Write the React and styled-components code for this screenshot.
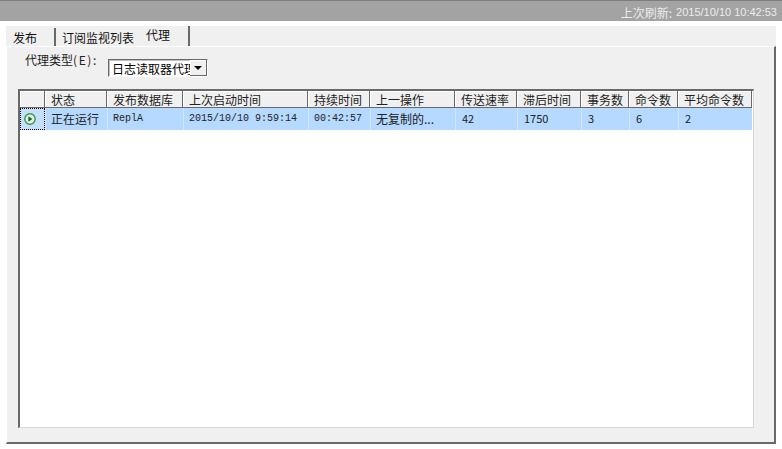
import React from 'react';
import styled, { createGlobalStyle } from 'styled-components';

const GlobalStyle = createGlobalStyle`
  html, body { margin: 0; padding: 0; background: #fff; }
  body { font-family: "Noto Sans CJK SC", "Liberation Sans", sans-serif; font-size: 12px; color: #000; }
`;

const columns = [
  { title: '状态', width: 62, value: '正在运行' },
  { title: '发布数据库', width: 76, value: 'ReplA', mono: true },
  { title: '上次启动时间', width: 125, value: '2015/10/10 9:59:14', mono: true },
  { title: '持续时间', width: 62, value: '00:42:57', mono: true },
  { title: '上一操作', width: 85, value: '无复制的...' },
  { title: '传送速率', width: 62, value: '42', num: true },
  { title: '滞后时间', width: 64, value: '1750', num: true },
  { title: '事务数', width: 48, value: '3', num: true },
  { title: '命令数', width: 49, value: '6', num: true },
  { title: '平均命令数', width: 74, value: '2', num: true },
];

const gridColumns = `25px ${columns.map((c) => `${c.width}px`).join(' ')}`;

const Page = styled.div`
  width: 782px;
  height: 449px;
  display: flex;
  flex-direction: column;
  overflow: hidden;
  background: #fff;
`;

const TitleBar = styled.div`
  height: 20px;
  flex: none;
  display: flex;
  justify-content: flex-end;
  align-items: flex-end;
  gap: 4px;
  padding-right: 5px;
  background: #a3a3a3;
  border-top: 1px solid #7d7d7d;
  color: #ececec;
  font-size: 12px;
  line-height: 17px;
`;

const TitleDate = styled.span`
  font-family: "Liberation Sans", sans-serif;
  font-size: 11px;
`;

const Body = styled.div`
  flex: 1;
  display: flex;
  flex-direction: column;
  margin: 5px 6px 5px 6px;
  background: #f0f0f0;
`;

const TabStrip = styled.div`
  height: 20px;
  flex: none;
  display: flex;
  align-items: flex-end;
  padding-left: 7px;
`;

const Tab = styled.div`
  height: ${(p) => (p.$active ? 20 : 18)}px;
  width: ${(p) => p.$width}px;
  box-sizing: border-box;
  padding-left: ${(p) => p.$pad}px;
  line-height: ${(p) => (p.$active ? 17 : 19)}px;
  border-right: ${(p) => (p.$plain ? 'none' : '2px solid #696969')};
  font-size: 12px;
  color: #111;
`;

const Panel = styled.div`
  flex: 1;
  display: flex;
  flex-direction: column;
  box-sizing: border-box;
  border-left: 1px solid #fff;
  border-top: 1px solid #fff;
  border-right: 2px solid #696969;
  border-bottom: 2px solid #696969;
  padding: 6px 20px 14px 11px;
`;

const FilterRow = styled.div`
  display: flex;
  align-items: flex-start;
  height: 36px;
  flex: none;
  padding-left: 7px;
  gap: 6px;
`;

const FilterLabel = styled.span`
  width: 77px;
  line-height: 14px;
  white-space: nowrap;
  color: #222;
`;

const Accel = styled.span`
  letter-spacing: 1.6px;
`;

const Select = styled.div`
  width: 100px;
  height: 18px;
  margin-top: 6px;
  box-sizing: border-box;
  display: flex;
  background: #fff;
  border: 1px solid;
  border-color: #696969 #fff #fff #696969;
  box-shadow: inset 1px 1px 0 #c0c0c0;
`;

const SelectValue = styled.span`
  flex: 1;
  overflow: hidden;
  white-space: nowrap;
  padding-left: 3px;
  line-height: 17px;
`;

const SelectArrow = styled.span`
  width: 16px;
  flex: none;
  display: flex;
  align-items: center;
  justify-content: center;
  background: #f0f0f0;
  border-right: 1px solid #696969;
  border-bottom: 1px solid #696969;
  box-shadow: inset 1px 1px 0 #fff;
  &::before {
    content: '';
    border-left: 4px solid transparent;
    border-right: 4px solid transparent;
    border-top: 4px solid #000;
  }
`;

const Grid = styled.div`
  flex: 1;
  box-sizing: border-box;
  background: #fff;
  border: 1px solid;
  border-width: 2px 1px 1px 2px;
  border-color: #696969 #d8d8d8 #d8d8d8 #696969;
`;

const Row = styled.div`
  display: grid;
  grid-template-columns: ${gridColumns};
`;

const HeaderCell = styled.div`
  height: 17px;
  box-sizing: border-box;
  padding-left: 6px;
  line-height: 17px;
  white-space: nowrap;
  overflow: hidden;
  color: #222;
  background: #f0f0f0;
  border-right: 1px solid #696969;
  border-bottom: 1px solid #696969;
  box-shadow: inset 1px 1px 0 #fff;
`;

const RowHeader = styled.div`
  height: 22px;
  box-sizing: border-box;
  display: flex;
  align-items: center;
  padding-left: 2px;
  background: #c6e0fb;
  border: 1px dotted #000;
`;

const Cell = styled.div`
  height: 22px;
  box-sizing: border-box;
  padding-left: ${(p) => (p.$num ? 6 : 5)}px;
  line-height: 21px;
  white-space: nowrap;
  background: #b6d9ff;
  border-left: 1px solid #d4e8fc;
  color: #222;
  font-family: ${(p) => (p.$mono
    ? '"Liberation Mono", monospace'
    : '"Noto Sans CJK SC", "Liberation Sans", sans-serif')};
  font-size: ${(p) => (p.$mono ? 10 : p.$num ? 11 : 12)}px;
`;

const RunIcon = () => (
  <svg width="14" height="14" viewBox="0 0 14 14">
    <circle cx="7" cy="7" r="5.2" fill="#e9f6e4" stroke="#2f9b47" strokeWidth="1.4" />
    <path d="M5.4 4.2 L9.4 7 L5.4 9.8 Z" fill="#14622c" />
  </svg>
);

export default function App() {
  return (
    <Page>
      <GlobalStyle />
      <TitleBar>
        <span>上次刷新:</span>
        <TitleDate>2015/10/10 10:42:53</TitleDate>
      </TitleBar>
      <Body>
        <TabStrip>
          <Tab $width={43} $pad={0}>发布</Tab>
          <Tab $plain $width={84} $pad={6}>订阅监视列表</Tab>
          <Tab $active $width={50} $pad={6}>代理</Tab>
        </TabStrip>
        <Panel>
          <FilterRow>
            <FilterLabel>代理类型<Accel>(E):</Accel></FilterLabel>
            <Select>
              <SelectValue>日志读取器代理</SelectValue>
              <SelectArrow />
            </Select>
          </FilterRow>
          <Grid>
            <Row>
              <HeaderCell />
              {columns.map((c) => (
                <HeaderCell key={c.title}>{c.title}</HeaderCell>
              ))}
            </Row>
            <Row>
              <RowHeader><RunIcon /></RowHeader>
              {columns.map((c) => (
                <Cell key={c.title} $mono={c.mono} $num={c.num}>{c.value}</Cell>
              ))}
            </Row>
          </Grid>
        </Panel>
      </Body>
    </Page>
  );
}
